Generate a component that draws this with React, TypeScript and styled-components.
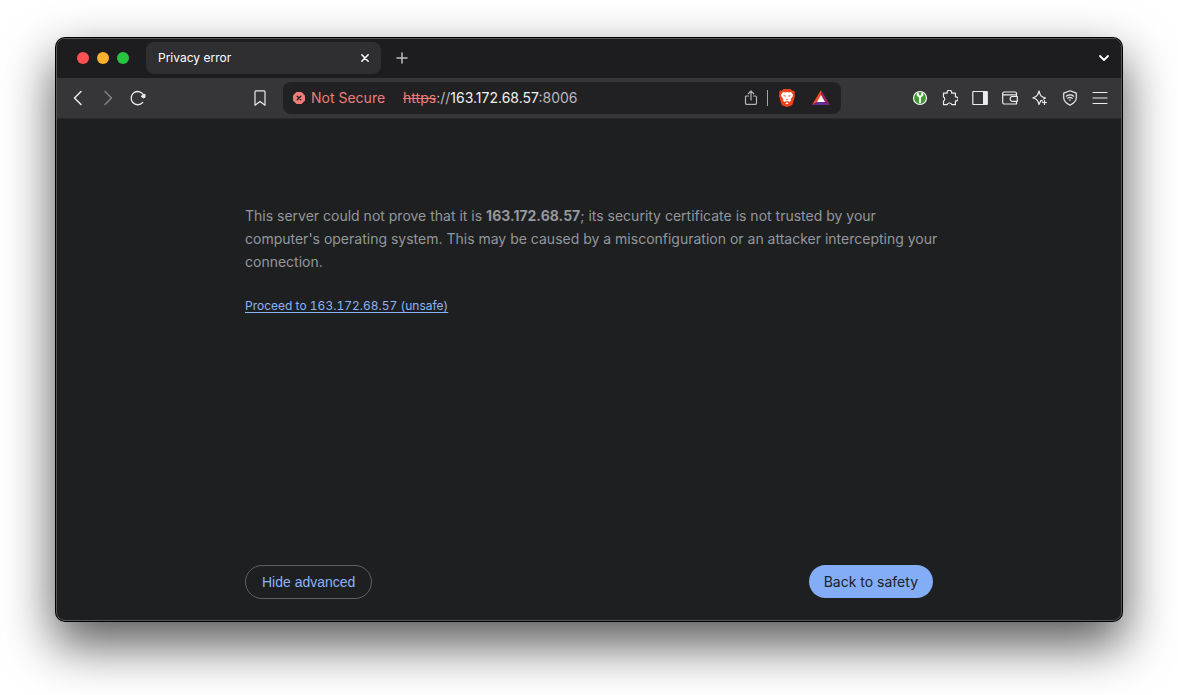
import React from "react";
import styled, { createGlobalStyle } from "styled-components";

const GlobalStyle = createGlobalStyle`
  *, *::before, *::after { box-sizing: border-box; }
  body {
    margin: 0;
    background: #fff;
    font-family: Inter, "Liberation Sans", sans-serif;
  }
  button { font: inherit; cursor: pointer; }
`;

const Desktop = styled.div`
  display: flex;
  min-height: 100vh;
  padding: 38px 56px 74px;
  overflow: hidden;
`;

const Window = styled.div`
  flex: 1;
  min-width: 0;
  display: flex;
  flex-direction: column;
  overflow: hidden;
  border: 1px solid #555657;
  border-radius: 9px;
  background: #1e1f21;
  box-shadow: 0 0 0 1px #000, 0 22px 50px 2px rgba(0, 0, 0, 0.65);
`;

const TabStrip = styled.div`
  display: flex;
  align-items: center;
  height: 39px;
  padding: 0 5px 2px 20px;
  background: #1d1d1f;
`;

const Lights = styled.div`
  display: flex;
  gap: 8px;
  margin-right: 17px;
`;

const Light = styled.button<{ $color: string }>`
  width: 12px;
  height: 12px;
  padding: 0;
  border: 0;
  border-radius: 50%;
  background: ${(p) => p.$color};
`;

const Tab = styled.div`
  display: flex;
  align-items: center;
  justify-content: space-between;
  width: 235px;
  height: 32px;
  padding: 0 4px 0 12px;
  margin-right: 9px;
  border-radius: 8px;
  background: #2f2f31;
  color: #fff;
  font-size: 12px;
`;

const IconButton = styled.button<{ $size?: number; $color?: string }>`
  display: flex;
  flex: none;
  align-items: center;
  justify-content: center;
  width: ${(p) => p.$size ?? 30}px;
  height: 24px;
  padding: 0;
  border: 0;
  background: none;
  color: ${(p) => p.$color ?? "#ececed"};
`;

const Spacer = styled.div`
  flex: 1;
`;

const Toolbar = styled.div`
  display: flex;
  align-items: center;
  height: 41px;
  padding: 0 6px;
  background: #363638;
  border-bottom: 1px solid #2a2a2c;
`;

const ButtonGroup = styled.div`
  display: flex;
`;

const AddressArea = styled.div`
  flex: 1;
  min-width: 0;
  display: flex;
  align-items: center;
  gap: 8px;
  margin: 0 64px 0 92px;
`;

const AddressBar = styled.div`
  flex: 1;
  min-width: 0;
  display: flex;
  align-items: center;
  height: 32px;
  padding: 0 3px 0 10px;
  border-radius: 8px;
  background: #212123;
  font-size: 14px;
  line-height: 16px;
`;

const SecurityChip = styled.button`
  display: flex;
  flex: none;
  align-items: center;
  gap: 6px;
  padding: 0;
  margin-right: 18px;
  border: 0;
  background: none;
  color: #ee7d77;
`;

const Address = styled.span`
  flex: 1;
  min-width: 0;
  overflow: hidden;
  white-space: nowrap;
  color: #b9b9bb;
  outline: none;
`;

const Scheme = styled.s`
  color: #ee7d77;
`;

const Host = styled.span`
  color: #f0f0f1;
`;

const Divider = styled.span`
  width: 1px;
  height: 16px;
  margin: 0 2px 0 3px;
  background: #a5a5a7;
`;

const Page = styled.main`
  flex: 1;
  display: flex;
  flex-direction: column;
  width: 100%;
  max-width: 720px;
  margin: 0 auto;
  padding: 85px 16px 21px;
`;

const Details = styled.p`
  margin: 0 -10px 22px 0;
  color: #94979c;
  font-size: 14px;
  line-height: 23px;
`;

const ProceedLink = styled.a`
  align-self: flex-start;
  color: #8ab4f8;
  font-size: 12px;
  font-variant-numeric: tabular-nums;
  line-height: 22px;
  text-underline-offset: 2px;
`;

const Actions = styled.div`
  display: flex;
  align-items: flex-start;
  justify-content: space-between;
  margin-top: auto;
  padding-top: 24px;
`;

const Action = styled.button<{ $primary?: boolean }>`
  height: ${(p) => (p.$primary ? 33 : 34)}px;
  padding: ${(p) => (p.$primary ? "0 15px" : "0 16px")};
  border: ${(p) => (p.$primary ? "0" : "1px solid #5f6063")};
  border-radius: 17px;
  background: ${(p) => (p.$primary ? "#83adf6" : "transparent")};
  color: ${(p) => (p.$primary ? "#202124" : "#8ab4f8")};
  font-family: ${(p) => (p.$primary ? "inherit" : '"Liberation Sans", sans-serif')};
  font-size: 14px;
`;

const Svg = styled.svg`
  display: block;
  flex: none;
  fill: none;
  stroke: currentColor;
  stroke-linecap: round;
  stroke-linejoin: round;
`;

type IconProps = { size?: number; stroke?: number; children: React.ReactNode };

const Icon = ({ size = 16, stroke = 1.2, children }: IconProps) => (
  <Svg width={size} height={size} viewBox={`0 0 ${size} ${size}`} strokeWidth={stroke} aria-hidden="true">
    {children}
  </Svg>
);

const BraveLion = () => (
  <Icon size={18} stroke={0}>
    <path fill="#f4431c" d="M5.5 0h7l1.6 1.7 1.7-.2 1.2 2-.6 1.6.6 1.7-2.3 7.9c-.3 1-.9 1.5-1.7 2L9 18l-4-1.3c-.8-.5-1.4-1-1.7-2L1 6.8l.6-1.7-.6-1.6 1.2-2 1.7.2z" />
    <path fill="#fff" d="M5 3l2.2.6L9 3l1.8.6L13 3l2 2.8-.4 1.7-1.9 2.4.3 1.5-1.5 1.5-1.7-1-.8.5v.8l1.5 1L9 15.5l-1.5-1.3 1.5-1v-.8l-.8-.5-1.7 1L5 11.4l.3-1.5-1.900-2.400L3 5.800z" />
    <path fill="#f4431c" d="M5 6.200l2.600.4-.4 1.400zM13 6.200l-2.600.4.4 1.400zM7.300 9.600L9 10.200l1.700-.6L9 11.200z" />
  </Icon>
);

const RewardsTriangle = () => (
  <Icon size={18} stroke={0}>
    <path fill="#ff4724" d="M9 1v5.600L5.200 13 0 16z" />
    <path fill="#9e1f63" d="M9 1l9 15-5.200-3L9 6.600z" />
    <path fill="#662d91" d="M0 16l5.200-3h7.600l5.200 3z" />
    <path fill="#fff" d="M9 6l4 7H5z" />
  </Icon>
);

export default function App() {
  return (
    <>
      <GlobalStyle />
      <Desktop>
        <Window>
          <TabStrip>
            <Lights>
              <Light $color="#ff5152" aria-label="Close window" />
              <Light $color="#ffb02e" aria-label="Minimize window" />
              <Light $color="#28c440" aria-label="Zoom window" />
            </Lights>
            <Tab>
              Privacy error
              <IconButton $size={24} $color="#fff" aria-label="Close tab">
                <Icon size={10} stroke={1.5}><path d="M1.8 1.8l6.400 6.400M8.200 1.800L1.800 8.200" /></Icon>
              </IconButton>
            </Tab>
            <IconButton $size={24} $color="#bdbdbf" aria-label="New tab">
              <Icon size={12} stroke={1.5}><path d="M6 1v10M1 6h10" /></Icon>
            </IconButton>
            <Spacer />
            <IconButton $size={24} $color="#fff" aria-label="Search tabs">
              <Icon size={12} stroke={1.8}><path d="M2 4l4 4 4-4" /></Icon>
            </IconButton>
          </TabStrip>

          <Toolbar>
            <ButtonGroup>
              <IconButton aria-label="Back">
                <Icon stroke={1.5}><path d="M11 1.500L4.500 8l6.500 6.500" /></Icon>
              </IconButton>
              <IconButton $color="#828284" aria-label="Forward">
                <Icon stroke={1.5}><path d="M5 1.500L11.500 8 5 14.500" /></Icon>
              </IconButton>
              <IconButton aria-label="Reload">
                <Icon stroke={1.3}>
                  <path d="M13.800 5.500A6.600 6.600 0 1 0 12.800 12.400" />
                  <path fill="currentColor" strokeWidth="1" d="M15 4.500v2.800l-1.600.7-2-1.500z" />
                </Icon>
              </IconButton>
            </ButtonGroup>

            <AddressArea>
              <IconButton aria-label="Bookmark this page">
                <Icon><path d="M4 .8h8a1 1 0 0 1 1 1v13.400l-5-3.800-5 3.800V1.800a1 1 0 0 1 1-1z" /></Icon>
              </IconButton>
              <AddressBar>
                <SecurityChip>
                  <Icon size={12} stroke={1.3}>
                    <path fill="currentColor" stroke="none" d="M3.500 0h5L12 3.500v5L8.500 12h-5L0 8.500v-5z" />
                    <path stroke="#212123" d="M4.200 4.200l3.600 3.600M7.800 4.200L4.200 7.800" />
                  </Icon>
                  Not Secure
                </SecurityChip>
                <Address role="textbox" aria-label="Address" tabIndex={0}>
                  <Scheme>https</Scheme>://<Host>163.172.68.57</Host>:8006
                </Address>
                <IconButton $size={26} $color="#b4b4b6" aria-label="Share">
                  <Icon>
                    <path d="M5.500 6H3.500a1 1 0 0 0-1 1v6.300a1 1 0 0 0 1 1h9a1 1 0 0 0 1-1V7a1 1 0 0 0-1-1h-2M8 10V1.200M5.200 3.800L8 1l2.800 2.800" />
                  </Icon>
                </IconButton>
                <Divider />
                <IconButton $size={34} aria-label="Brave Shields"><BraveLion /></IconButton>
                <IconButton $size={34} aria-label="Brave Rewards"><RewardsTriangle /></IconButton>
              </AddressBar>
            </AddressArea>

            <ButtonGroup>
              <IconButton aria-label="Password extension">
                <Icon>
                  <circle cx="8" cy="8" r="6.500" fill="#409a32" stroke="#f2f5f1" />
                  <path stroke="#fff" strokeWidth="2" d="M8 7v5.500M5.800 3.600v1.600L8 7l2.200-1.800V3.600" />
                </Icon>
              </IconButton>
              <IconButton aria-label="Extensions">
                <Icon>
                  <path d="M1.500 3.200h3.700a2.300 2.300 0 1 1 4.400 0h3.800v3.700a2.100 2.100 0 1 1 0 4v3.800H9.800a2.400 2.400 0 0 0-4.600 0H1.500v-3.700a2.200 2.200 0 0 0 0-4z" />
                </Icon>
              </IconButton>
              <IconButton aria-label="Side panel">
                <Icon><rect x=".8" y="1.500" width="14.400" height="13" rx=".5" /><path fill="currentColor" stroke="none" d="M11 1.500h4.500v13H11z" /></Icon>
              </IconButton>
              <IconButton aria-label="Wallet">
                <Icon>
                  <path d="M14.500 5.500v-2a1.500 1.500 0 0 0-1.500-1.500H2.200A1.500 1.500 0 0 0 .7 3.500v9A1.500 1.500 0 0 0 2.200 14h12.300v-2.500M1 4.800h13.500M15.300 6.500h-4.800a2.400 2.400 0 0 0 0 4.800h4.800z" />
                </Icon>
              </IconButton>
              <IconButton aria-label="Leo AI">
                <Icon>
                  <path d="M10.500 11l-1.500-.7-2 4.200Q6 10.500 4.500 9.500T.8 8Q4 6.700 5 5.600T7 1Q8 4.800 9 5.800T13.500 8L11.500 9" />
                  <path d="M12.500 10.500v4M10.500 12.500h4" />
                </Icon>
              </IconButton>
              <IconButton aria-label="VPN">
                <Icon>
                  <path d="M8 .8l6.300 2.300v4.500c0 3.400-2.900 6-6.300 7.600-3.400-1.600-6.300-4.200-6.300-7.600V3.100z" />
                  <path d="M4.300 6.200q3.700-2.500 7.400 0M5.700 8.200q2.300-1.500 4.600 0M7.500 10h1" />
                </Icon>
              </IconButton>
              <IconButton aria-label="Menu">
                <Icon><path d="M1 2.500h14M1 8h14M1 13.500h14" /></Icon>
              </IconButton>
            </ButtonGroup>
          </Toolbar>

          <Page>
            <Details>
              This server could not prove that it is <strong>163.172.68.57</strong>; its security certificate is not
              trusted by your computer's operating system. This may be caused by a misconfiguration or an attacker
              intercepting your connection.
            </Details>
            <ProceedLink href="#proceed">Proceed to 163.172.68.57 (unsafe)</ProceedLink>
            <Actions>
              <Action>Hide advanced</Action>
              <Action $primary>Back to safety</Action>
            </Actions>
          </Page>
        </Window>
      </Desktop>
    </>
  );
}
